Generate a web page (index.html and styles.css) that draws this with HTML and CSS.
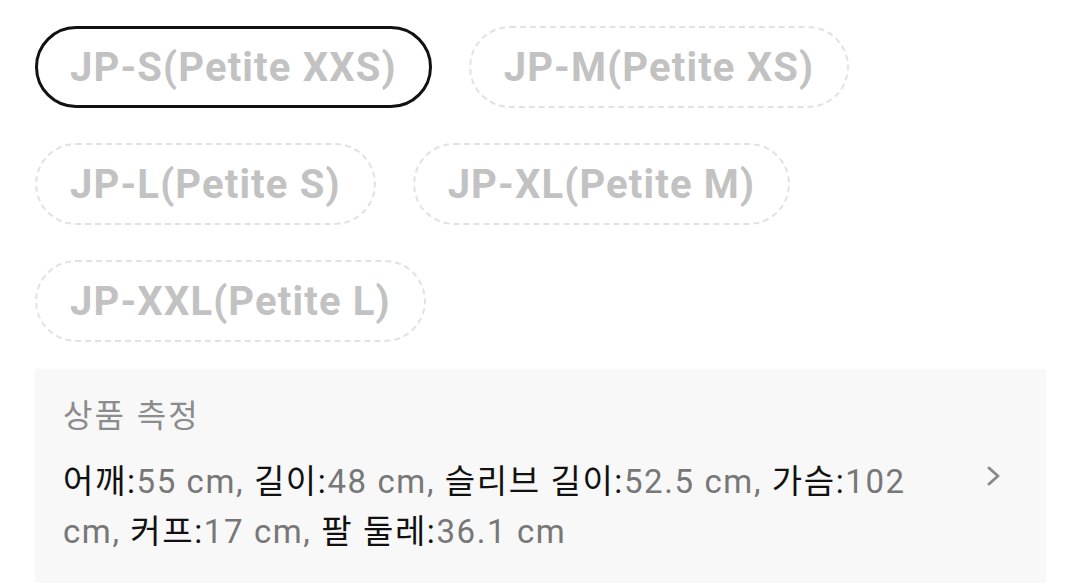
FILE: index.html
```html
<!DOCTYPE html>
<html lang="ko">
<head>
<meta charset="utf-8">
<link rel="stylesheet" href="styles.css">
</head>
<body>
<div class="page">
  <div class="chips">
    <div class="chip selected">JP-S(Petite XXS)</div>
    <div class="chip">JP-M(Petite XS)</div>
    <div class="chip">JP-L(Petite S)</div>
    <div class="chip">JP-XL(Petite M)</div>
    <div class="chip">JP-XXL(Petite L)</div>
  </div>
  <div class="measure">
    <div class="measure-title">상품 측정</div>
    <div class="measure-row">
      <p class="measure-text"><span class="k">어깨:</span>55 cm, <span class="k">길이:</span>48 cm, <span class="k">슬리브 길이:</span>52.5 cm, <span class="k">가슴:</span>102 cm, <span class="k">커프:</span>17 cm, <span class="k">팔 둘레:</span>36.1 cm</p>
      <svg class="chev" width="16" height="22" viewBox="0 0 16 22"><path d="M3 3 L12 11 L3 19" fill="none" stroke="#8a8a8a" stroke-width="3" stroke-linecap="round" stroke-linejoin="round"/></svg>
    </div>
  </div>
</div>
</body>
</html>
```
FILE: styles.css
```css
html, body {
  margin: 0;
  padding: 0;
  background: #ffffff;
}
body {
  font-family: Roboto, "Noto Sans CJK KR", sans-serif;
  overflow: hidden;
}
.page {
  padding: 26px 34px 0 35px;
}
.chips {
  display: flex;
  flex-wrap: wrap;
  column-gap: 37px;
  row-gap: 35px;
  width: 880px;
}
.chip {
  box-sizing: border-box;
  height: 82px;
  padding: 0 33px;
  border: 2px dashed #e2e2e2;
  border-radius: 41px;
  display: flex;
  align-items: center;
  font-size: 40px;
  letter-spacing: 1.15px;
  font-weight: 700;
  color: #c2c2c2;
  white-space: nowrap;
}
.chip.selected {
  border: 3px solid #111111;
  padding: 0 32px;
}
.measure {
  margin-top: 27px;
  background: #f8f8f8;
  padding: 24px 28px 30px 28px;
  height: 214px;
  box-sizing: border-box;
}
.measure-title {
  font-family: "Noto Sans CJK KR", sans-serif;
  font-size: 32px;
  letter-spacing: 2px;
  line-height: 40px;
  color: #8c8c8c;
}
.measure-row {
  display: flex;
  align-items: flex-start;
  justify-content: space-between;
  margin-top: 24px;
}
.measure-text {
  margin: 0;
  width: 880px;
  font-size: 33px;
  letter-spacing: 1.6px;
  line-height: 50px;
  color: #777777;
}
.measure-text .k {
  color: #111111;
}
.chev {
  margin-top: 8px;
  margin-right: 16px;
}
```
